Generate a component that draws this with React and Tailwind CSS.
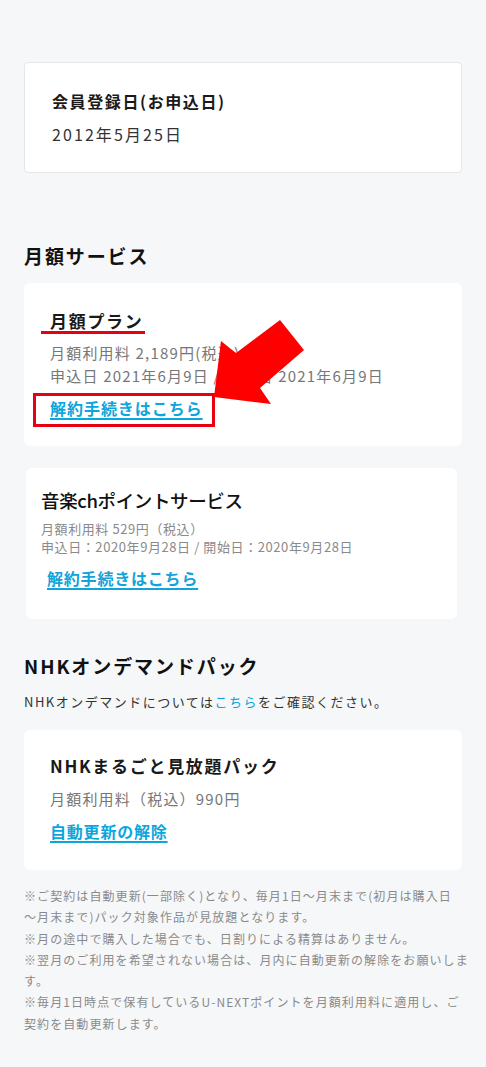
import React from "react";

export default function App() {
  return (
    <div
      className="min-h-[1067px] w-[486px] bg-[#f6f7f9] text-[#222] px-6 pt-[62px] pb-10 font-['Noto_Sans_CJK_JP','Noto_Sans',sans-serif]"
    >
      {/* Card 1 */}
      <div className="h-[111px] rounded-[4px] border border-[#e4e6e9] bg-white pl-[27px] pt-[27px]">
        <div className="text-[16px] font-bold leading-[22px] tracking-[0.1em] text-[#1a1a1a]">
          会員登録日(お申込日)
        </div>
        <div className="mt-[11px] text-[16px] leading-[22px] tracking-[0.13em] text-[#333]">
          2012年5月25日
        </div>
      </div>

      {/* 月額サービス */}
      <h2 className="mt-[70px] text-[19px] font-bold leading-[26px] tracking-[0.1em] text-[#111]">
        月額サービス
      </h2>

      {/* Card 2 */}
      <div className="relative mt-[14px] h-[163px] rounded-[6px] bg-white pl-[26px] pt-[26px]">
        <div className="text-[17px] font-bold leading-[24px] tracking-[0.1em] text-[#1a1a1a]">
          月額プラン
        </div>
        <div className="mt-[8px] text-[15px] leading-[23px] tracking-[0.08em] text-[#777]">
          月額利用料 2,189円(税込)
        </div>
        <div className="text-[15px] leading-[23px] tracking-[0.08em] text-[#777]">
          申込日 2021年6月9日 / 開始日 2021年6月9日
        </div>
        <a className="mt-[9px] inline-block text-[16px] font-bold leading-[24px] tracking-[0.06em] text-[#0aa6dc] underline decoration-[1.5px] underline-offset-[3px]">
          解約手続きはこちら
        </a>

        {/* annotation: red underline */}
        <div className="absolute left-[17px] top-[48px] h-[3px] w-[104px] bg-[#e60012]" />
        {/* annotation: red box */}
        <div className="absolute left-[9px] top-[110px] h-[34px] w-[182px] border-[3px] border-[#e60012]" />
        {/* annotation: arrow */}
        <svg
          className="absolute left-0 top-0"
          width="300"
          height="140"
          viewBox="0 0 300 140"
        >
          <polygon
            points="190,114 197,58 212,70 256,37 280,67 236,105 247,121"
            fill="#ff0000"
          />
        </svg>
      </div>

      {/* Card 3 (音楽ch) */}
      <div className="ml-[2px] mr-[5px] mt-[22px] h-[151px] rounded-[6px] bg-white pl-[15px] pt-[18px]">
        <div className="text-[18.5px] font-medium leading-[28px] tracking-[-0.02em] text-[#111]">
          音楽chポイントサービス
        </div>
        <div className="mt-[6px] text-[13px] leading-[18px] tracking-[0.045em] text-[#8a8a8a]">
          月額利用料 529円（税込）
        </div>
        <div className="text-[13px] leading-[18px] tracking-[0.045em] text-[#8a8a8a]">
          申込日：2020年9月28日 / 開始日：2020年9月28日
        </div>
        <a className="ml-[6px] mt-[10px] inline-block text-[16px] font-bold leading-[24px] tracking-[0.05em] text-[#12a3d9] underline decoration-[1.5px] underline-offset-[3px]">
          解約手続きはこちら
        </a>
      </div>

      {/* NHK */}
      <h2 className="mt-[34px] text-[19px] font-bold leading-[26px] tracking-[0.1em] text-[#111]">
        NHKオンデマンドパック
      </h2>
      <p className="mt-[13px] text-[13px] leading-[20px] tracking-[0.115em] text-[#333]">
        NHKオンデマンドについては<span className="text-[#0aa6dc]">こちら</span>をご確認ください。
      </p>

      {/* Card 4 */}
      <div className="mt-[18px] h-[140px] rounded-[6px] bg-white pl-[26px] pt-[24px]">
        <div className="text-[17px] font-bold leading-[24px] tracking-[0.1em] text-[#1a1a1a]">
          NHKまるごと見放題パック
        </div>
        <div className="mt-[10px] text-[15px] leading-[22px] tracking-[0.08em] text-[#777]">
          月額利用料（税込）990円
        </div>
        <a className="mt-[9px] inline-block text-[16px] font-bold leading-[24px] tracking-[0.05em] text-[#0aa6dc] underline decoration-[1.5px] underline-offset-[3px]">
          自動更新の解除
        </a>
      </div>

      {/* Notes */}
      <div className="mt-[15px] whitespace-nowrap text-[12px] leading-[21.3px] tracking-[0.09em] text-[#8a8a8a]">
        <div>※ご契約は自動更新(一部除く)となり、毎月1日～月末まで(初月は購入日</div>
        <div>～月末まで)パック対象作品が見放題となります。</div>
        <div>※月の途中で購入した場合でも、日割りによる精算はありません。</div>
        <div>※翌月のご利用を希望されない場合は、月内に自動更新の解除をお願いしま</div>
        <div>す。</div>
        <div>※毎月1日時点で保有しているU-NEXTポイントを月額利用料に適用し、ご</div>
        <div>契約を自動更新します。</div>
      </div>
    </div>
  );
}
